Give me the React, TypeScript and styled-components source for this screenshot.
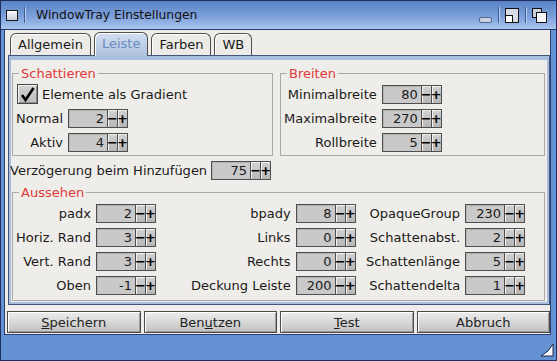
import React from 'react';
import styled, { createGlobalStyle } from 'styled-components';

const GlobalStyle = createGlobalStyle`
  html, body { margin: 0; padding: 0; background: #ffffff; }
  body {
    font-family: "DejaVu Sans", "Liberation Sans", sans-serif;
    font-size: 13px;
    color: #1a1a1a;
  }
`;

const Window = styled.div`
  width: 557px;
  height: 361px;
  box-sizing: border-box;
  display: flex;
  flex-direction: column;
  background: #6391d1;
  border: 1px solid #1c315f;
`;

const TitleBar = styled.div`
  height: 28px;
  flex: none;
  display: flex;
  align-items: center;
  padding: 0 9px 0 5px;
  background: linear-gradient(#5a83c6, #7ca0da 55%, #a9c5ed);
  border-bottom: 1px solid #243c6e;
`;

const TitleText = styled.div`
  flex: 1;
  margin-left: 5px;
  font-size: 12.3px;
  color: #111;
`;

const Separator = styled.div`
  width: 1px;
  height: 16px;
  margin: 0 6px;
  background: #3d5c94;
  box-shadow: 1px 0 0 #b7cdee;
`;

const Gadget = styled.svg`
  display: block;
  flex: none;
`;

const Middle = styled.div`
  flex: 1;
  min-height: 0;
  display: flex;
  padding: 0 5px 0 3px;
`;

const Content = styled.div`
  flex: 1;
  display: flex;
  flex-direction: column;
  background: #efede9;
  border: 1px solid #27406f;
  border-top: none;
  padding: 2px 0 2px 2px;
`;

const TabBar = styled.div`
  height: 23px;
  flex: none;
  display: flex;
  align-items: flex-end;
  gap: 3px;
  padding-left: 3px;
`;

const Tab = styled.div<{ $active?: boolean }>`
  position: relative;
  z-index: ${p => (p.$active ? 1 : 0)};
  box-sizing: border-box;
  height: ${p => (p.$active ? 24 : 22)}px;
  margin-bottom: ${p => (p.$active ? -1 : 0)}px;
  padding: 0 7px ${p => (p.$active ? 2 : 0)}px;
  display: flex;
  align-items: center;
  border: 1px solid #4e4e4e;
  border-bottom: none;
  border-radius: 6px 6px 0 0;
  background: ${p => (p.$active ? 'linear-gradient(#d3dff0, #aec2df)' : '#ecebe7')};
  color: ${p => (p.$active ? '#6a8cc2' : '#1a1a1a')};
  box-shadow: inset 1px 1px 0 #ffffff;
`;

const Panel = styled.div`
  flex: 1;
  margin-left: 1px;
  display: flex;
  flex-direction: column;
  border: 1px solid #44557c;
  box-shadow: inset 0 4px 0 #a9bedc, inset 2px 0 0 #a9bedc, inset -2px 0 0 #a9bedc,
    inset 0 -2px 0 #a9bedc;
  padding: 10px 4px 3px 3px;
`;

const TopRow = styled.div`
  display: grid;
  grid-template-columns: 261px 1fr;
  gap: 7px;
`;

const Group = styled.fieldset`
  margin: 0;
  min-width: 0;
  border: 1px solid #a9a9a9;
  padding: 1px 3px 1px 3px;
`;

const Legend = styled.legend`
  color: #df3a3a;
  line-height: 15px;
  padding: 0 2px;
  margin-left: 3px;
`;

const CheckRow = styled.div`
  height: 24px;
  display: flex;
  align-items: center;
  gap: 4px;
  padding-left: 1px;
`;

const CheckBox = styled.div`
  width: 21px;
  height: 20px;
  box-sizing: border-box;
  display: flex;
  align-items: center;
  justify-content: center;
  border: 1px solid #464646;
  background: linear-gradient(#d4d4d4, #bcbcbc);
  box-shadow: inset 1px 1px 0 #f4f4f4, inset -1px -1px 0 #8c8c8c;
`;

const FormGrid = styled.div`
  display: grid;
  grid-template-columns: auto auto;
  grid-auto-rows: 24px;
  column-gap: 5px;
  justify-content: start;
  align-items: center;
`;

const Label = styled.span`
  justify-self: end;
  white-space: nowrap;
`;

const DelayRow = styled.div`
  height: 24px;
  margin: 2px 0 0 -2px;
  display: flex;
  align-items: center;
  gap: 4px;
`;

const Appearance = styled(Group)`
  margin-top: 3px;
  padding-bottom: 3px;
`;

const Columns = styled.div`
  display: grid;
  grid-template-columns: repeat(3, 1fr);
`;

const SpinWrap = styled.div`
  display: flex;
  height: 19px;
`;

const SpinField = styled.div`
  width: 40px;
  box-sizing: border-box;
  border: 1px solid #4e4e4e;
  background: #c9c9c9;
  box-shadow: inset 1px 1px 0 #b2b2b2;
  text-align: right;
  padding-right: 3px;
  line-height: 17px;
  color: #1a1a1a;
`;

const SpinButton = styled.div`
  width: 11px;
  box-sizing: border-box;
  margin-left: -1px;
  border: 1px solid #4e4e4e;
  background: linear-gradient(#d2d2d2, #b6b6b6);
  box-shadow: inset 1px 1px 0 #f2f2f2;
  display: flex;
  align-items: center;
  justify-content: center;
  font-weight: bold;
  font-size: 13px;
  color: #000;
`;

const ButtonRow = styled.div`
  height: 22px;
  flex: none;
  margin-top: 6px;
  display: grid;
  grid-template-columns: repeat(4, 1fr);
  gap: 3px;
`;

const ActionButton = styled.button`
  font: inherit;
  color: #222;
  padding: 0;
  border: 1px solid #4a4a4a;
  background: linear-gradient(#ededed, #c2c2c2);
  box-shadow: inset 1px 1px 0 #ffffff, inset -1px -1px 0 #9c9c9c;
`;

const BottomBar = styled.div`
  height: 22px;
  flex: none;
  display: flex;
  justify-content: flex-end;
  align-items: flex-end;
  padding: 0 2px 3px 0;
`;

const Spinner = ({ value }: { value: number }) => (
  <SpinWrap>
    <SpinField>{value}</SpinField>
    <SpinButton>−</SpinButton>
    <SpinButton>+</SpinButton>
  </SpinWrap>
);

const Field = ({ label, value }: { label: string; value: number }) => (
  <>
    <Label>{label}</Label>
    <Spinner value={value} />
  </>
);

const appearance: [string, number][][] = [
  [
    ['padx', 2],
    ['Horiz. Rand', 3],
    ['Vert. Rand', 3],
    ['Oben', -1],
  ],
  [
    ['bpady', 8],
    ['Links', 0],
    ['Rechts', 0],
    ['Deckung Leiste', 200],
  ],
  [
    ['OpaqueGroup', 230],
    ['Schattenabst.', 2],
    ['Schattenlänge', 5],
    ['Schattendelta', 1],
  ],
];

export default function App() {
  return (
    <>
      <GlobalStyle />
      <Window>
        <TitleBar>
          <Gadget width="12" height="11" viewBox="0 0 12 11">
            <defs>
              <linearGradient id="cg" x1="0" y1="0" x2="0" y2="1">
                <stop offset="0" stopColor="#ffffff" />
                <stop offset="1" stopColor="#c3ccd9" />
              </linearGradient>
            </defs>
            <rect x="0.5" y="0.5" width="11" height="10" fill="url(#cg)" stroke="#1b1b1b" />
          </Gadget>
          <Separator />
          <TitleText>WindowTray Einstellungen</TitleText>
          <Gadget width="13" height="16" viewBox="0 0 13 16">
            <rect x="0.5" y="10.5" width="12" height="5" rx="1.5" fill="#c7d3e4" stroke="#566a8e" />
          </Gadget>
          <Separator />
          <Gadget width="14" height="15" viewBox="0 0 14 15">
            <rect x="0.5" y="0.5" width="13" height="14" fill="#d7dde6" stroke="#111" />
            <rect x="0.5" y="7.5" width="7" height="7" fill="#ffffff" stroke="#111" />
          </Gadget>
          <Separator />
          <Gadget width="15" height="15" viewBox="0 0 15 15">
            <rect x="0.5" y="0.5" width="9" height="9" fill="#c9d0da" stroke="#111" />
            <rect x="4.5" y="4.5" width="10" height="10" fill="#f4f6f9" stroke="#111" />
          </Gadget>
        </TitleBar>
        <Middle>
          <Content>
            <TabBar>
              <Tab>Allgemein</Tab>
              <Tab $active>Leiste</Tab>
              <Tab>Farben</Tab>
              <Tab>WB</Tab>
            </TabBar>
            <Panel>
              <TopRow>
                <Group>
                  <Legend>Schattieren</Legend>
                  <CheckRow>
                    <CheckBox>
                      <svg width="15" height="15" viewBox="0 0 15 15">
                        <path d="M2 8 L5.5 13 L13.5 1" fill="none" stroke="#000" strokeWidth="2.6" />
                      </svg>
                    </CheckBox>
                    Elemente als Gradient
                  </CheckRow>
                  <FormGrid>
                    <Field label="Normal" value={2} />
                    <Field label="Aktiv" value={4} />
                  </FormGrid>
                </Group>
                <Group>
                  <Legend>Breiten</Legend>
                  <FormGrid>
                    <Field label="Minimalbreite" value={80} />
                    <Field label="Maximalbreite" value={270} />
                    <Field label="Rollbreite" value={5} />
                  </FormGrid>
                </Group>
              </TopRow>
              <DelayRow>
                Verzögerung beim Hinzufügen
                <Spinner value={75} />
              </DelayRow>
              <Appearance>
                <Legend>Aussehen</Legend>
                <Columns>
                  {appearance.map((col, i) => (
                    <FormGrid key={i}>
                      {col.map(([label, value]) => (
                        <Field key={label} label={label} value={value} />
                      ))}
                    </FormGrid>
                  ))}
                </Columns>
              </Appearance>
            </Panel>
            <ButtonRow>
              <ActionButton>
                <u>S</u>peichern
              </ActionButton>
              <ActionButton>
                Ben<u>u</u>tzen
              </ActionButton>
              <ActionButton>
                <u>T</u>est
              </ActionButton>
              <ActionButton>Abbruch</ActionButton>
            </ButtonRow>
          </Content>
        </Middle>
        <BottomBar>
          <svg width="14" height="14" viewBox="0 0 14 14">
            <path d="M13 1 V13 H1 Q9 9 13 1 Z" fill="#ffffff" stroke="#1c2b4a" />
          </svg>
        </BottomBar>
      </Window>
    </>
  );
}
